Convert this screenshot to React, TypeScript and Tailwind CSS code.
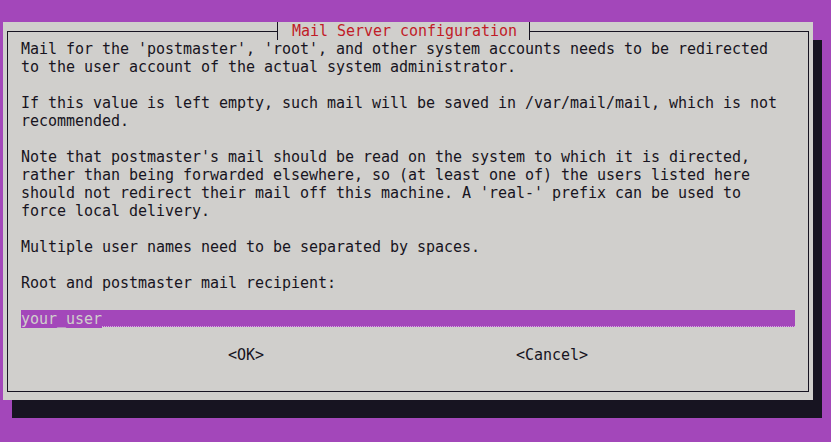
export default function App() {
  return (
    <main className="h-[442px] w-[831px] overflow-hidden bg-[#a347ba] pl-[3px] pt-[22px] font-['DejaVu_Sans_Mono',monospace] text-[15px] leading-[18px] tracking-[-0.03px] text-[#171421]">
      {/* DIALOG */}
      <div className="relative h-[378px] w-[810px] bg-[#d0cfcc] pb-[8px] pl-[4px] pr-[4px] pt-[9px] shadow-[9px_18px_0_#171421]">
        {/* TITLE */}
        <div className="absolute left-[274px] top-0 h-[18px] w-[253px] border-x border-[#171421] bg-[#d0cfcc] pl-[14px] whitespace-pre text-[#c01c28]">
          Mail Server configuration
        </div>

        <div className="h-full border border-[#171421] pl-[13px] pt-[8px]">
          <p>
            Mail for the 'postmaster', 'root', and other system accounts needs to be redirected
            <br />
            to the user account of the actual system administrator.
          </p>

          <p className="mt-[18px]">
            If this value is left empty, such mail will be saved in /var/mail/mail, which is not
            <br />
            recommended.
          </p>

          <p className="mt-[18px]">
            Note that postmaster's mail should be read on the system to which it is directed,
            <br />
            rather than being forwarded elsewhere, so (at least one of) the users listed here
            <br />
            should not redirect their mail off this machine. A 'real-' prefix can be used to
            <br />
            force local delivery.
          </p>

          <p className="mt-[18px]">Multiple user names need to be separated by spaces.</p>

          <p className="mt-[18px]">Root and postmaster mail recipient:</p>

          {/* INPUT */}
          <div className="mt-[18px] flex h-[18px] w-[774px]">
            <span className="h-[18px] bg-[#a347ba] text-[#d0cfcc]">your_user</span>
            <span className="h-[17px] flex-1 border-b border-dotted border-[#d9a3e3] bg-[#a347ba]" />
          </div>

          {/* BUTTONS */}
          <div className="mt-[18px] flex whitespace-pre">
            <span className="pl-[207px]">&lt;OK&gt;</span>
            <span className="pl-[252px]">&lt;Cancel&gt;</span>
          </div>
        </div>
      </div>
    </main>
  );
}
